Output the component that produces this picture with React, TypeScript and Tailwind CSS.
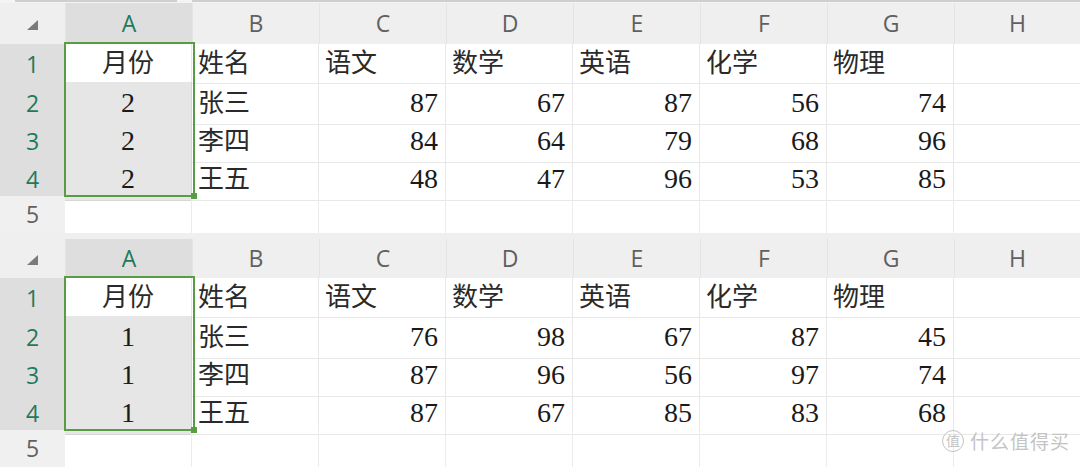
import React from 'react';

interface Person {
  name: string;
  scores: number[];
}

interface SheetProps {
  month: number;
  people: Person[];
  headerClass: string;
}

const columns = ['A', 'B', 'C', 'D', 'E', 'F', 'G', 'H'];
const subjects = ['语文', '数学', '英语', '化学', '物理'];

const cellFont = { fontFamily: '"Liberation Serif", "Noto Sans CJK SC", serif' };
const headFont = { fontFamily: '"Open Sans", "Liberation Sans", sans-serif' };

const rowGrid = 'grid grid-cols-[65px_repeat(7,127px)_1fr]';

const Corner: React.FC = () => (
  <svg width="14" height="12" viewBox="0 0 14 12" className="mt-[2px] ml-[1px]">
    <polygon points="1,11 12,1 12,11" fill="#7a7a7a" />
  </svg>
);

const Sheet: React.FC<SheetProps> = ({ month, people, headerClass }) => {
  const header = ['月份', '姓名', ...subjects];

  return (
    <div className="relative">
      {/* Column letters */}
      <div className={`${rowGrid} ${headerClass} bg-[#efefef]`}>
        <div className="flex items-center justify-center">
          <Corner />
        </div>
        {columns.map((c, i) => (
          <div
            key={c}
            style={headFont}
            className={`flex items-center justify-center border-l border-[#e4e4e4] text-[23px] ${
              i === 0 ? 'bg-[#dedede] text-[#1f7a5c]' : 'text-[#606060]'
            }`}
          >
            {c}
          </div>
        ))}
      </div>

      {/* Row 1 — titles */}
      <div className={`${rowGrid} h-[38px]`}>
        <div style={headFont} className="flex items-center justify-center bg-[#dedede] text-[23px] text-[#1f7a5c]">
          1
        </div>
        {header.map((h, i) => (
          <div
            key={h}
            style={cellFont}
            className={`flex items-center border-b border-r border-[#e8e8e8] text-[26px] text-[#2a2a2a] ${
              i === 0 ? 'justify-center bg-white' : 'pl-[6px]'
            }`}
          >
            {h}
          </div>
        ))}
        <div className="border-b border-[#e8e8e8]" />
      </div>

      {/* Data rows */}
      {people.map((p, r) => (
        <div key={p.name} className={`${rowGrid} h-[38px]`}>
          <div style={headFont} className="flex items-center justify-center bg-[#dedede] text-[23px] text-[#1f7a5c]">
            {r + 2}
          </div>
          <div
            style={cellFont}
            className="flex items-center justify-center border-b border-r border-[#d6d6d6] bg-[#e6e6e6] text-[28px] text-[#1a1a1a]"
          >
            {month}
          </div>
          <div style={cellFont} className="flex items-center border-b border-r border-[#e8e8e8] pl-[6px] text-[26px] text-[#2a2a2a]">
            {p.name}
          </div>
          {p.scores.map((s, i) => (
            <div
              key={i}
              style={cellFont}
              className="flex items-center justify-end border-b border-r border-[#e8e8e8] pr-[7px] text-[28px] text-[#1a1a1a]"
            >
              {s}
            </div>
          ))}
          <div className="border-b border-[#e8e8e8]" />
        </div>
      ))}

      {/* Row 5 — empty */}
      <div className={`${rowGrid} h-[37px]`}>
        <div style={headFont} className="flex items-center justify-center bg-[#f0f0f0] text-[23px] text-[#606060]">
          5
        </div>
        {columns.slice(0, 7).map((c) => (
          <div key={c} className="border-r border-[#ececec]" />
        ))}
        <div />
      </div>

      {/* Selection A1:A4 */}
      <div className="pointer-events-none absolute left-[64px] bottom-[36px] h-[155px] w-[131px] border-2 border-[#5a9b45]">
        <div className="absolute -right-[4px] -bottom-[4px] h-[6px] w-[6px] bg-[#5a9b45]" />
      </div>
    </div>
  );
};

const February: Person[] = [
  { name: '张三', scores: [87, 67, 87, 56, 74] },
  { name: '李四', scores: [84, 64, 79, 68, 96] },
  { name: '王五', scores: [48, 47, 96, 53, 85] },
];

const January: Person[] = [
  { name: '张三', scores: [76, 98, 67, 87, 45] },
  { name: '李四', scores: [87, 96, 56, 97, 74] },
  { name: '王五', scores: [87, 67, 85, 83, 68] },
];

const App: React.FC = () => {
  return (
    <div className="relative h-[467px] w-[1080px] overflow-hidden bg-white">
      {/* Leftover edge of the previous capture */}
      <div className="flex h-[3px] bg-[#f4f4f4]">
        <div className="w-[15px]" />
        <div className="w-[162px] border-t-2 border-[#cfcfcf]" />
        <div className="w-[15px]" />
        <div className="flex-1 border-t-2 border-[#cfcfcf]" />
      </div>

      <Sheet month={2} people={February} headerClass="h-[41px]" />
      <Sheet month={1} people={January} headerClass="h-[45px] pt-[6px]" />

      {/* Watermark */}
      <div
        style={{ fontFamily: '"Noto Sans CJK SC", sans-serif' }}
        className="absolute right-[10px] bottom-[12px] flex items-center gap-[6px] text-[19px] text-[#c4c4c4]"
      >
        <span className="flex h-[22px] w-[22px] items-center justify-center rounded-full border border-[#c4c4c4] text-[14px]">
          值
        </span>
        <span className="tracking-[1px]">什么值得买</span>
      </div>
    </div>
  );
};

export default App;
